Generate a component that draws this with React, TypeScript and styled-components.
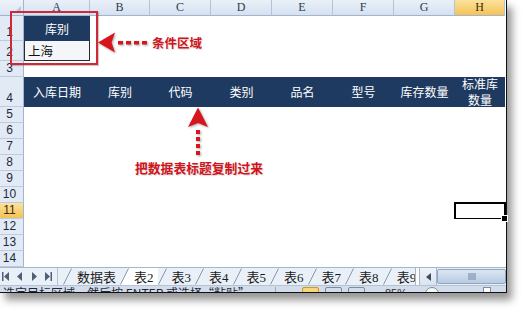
import React from "react";
import styled, { createGlobalStyle, css } from "styled-components";

const GlobalStyle = createGlobalStyle`
  html, body { margin: 0; padding: 0; background: #fff; }
  body { font-family: "Liberation Sans", "Noto Sans CJK SC", sans-serif; }
  * { box-sizing: border-box; }
`;

const Page = styled.div`
  position: relative;
  width: 529px;
  height: 316px;
  overflow: hidden;
  background: #fff;
`;

const Window = styled.div`
  width: 507px;
  display: flex;
  flex-direction: column;
  background: #fff;
  border-right: 1.5px solid #111;
  border-bottom: 1.5px solid #111;
  box-shadow: 5px 7px 8px rgba(0, 0, 0, 0.42);
`;

const Sheet = styled.div`
  display: grid;
  grid-template-columns: 24px 66px 60px repeat(5, 61px) 50px;
  grid-template-rows: 16px 25px 20px 16px 30px repeat(10, 16px);
`;

const orange = css`
  background: linear-gradient(#fbe29b, #f4c257);
  color: #3a2c10;
`;

const Corner = styled.div`
  position: relative;
  background: linear-gradient(#eef3fa, #dbe5f2);
  border-right: 1px solid #9eb6ce;
  border-bottom: 1px solid #9eb6ce;
  &::after {
    content: "";
    position: absolute;
    right: 2px;
    bottom: 2px;
    border-left: 7px solid transparent;
    border-bottom: 7px solid #b9c6d6;
  }
`;

const ColHead = styled.div<{ $active?: boolean }>`
  display: flex;
  align-items: center;
  justify-content: center;
  font-family: "Liberation Serif", serif;
  font-size: 12px;
  color: #2b3b4f;
  background: linear-gradient(#e9f0f9, #d6e1f0);
  border-right: 1px solid #b2c4da;
  border-bottom: 1px solid #9eb6ce;
  ${(p) => p.$active && orange}
`;

const RowHead = styled.div<{ $active?: boolean }>`
  display: flex;
  align-items: flex-end;
  justify-content: center;
  padding: 0 4px 1px 0;
  font-family: "Liberation Sans", sans-serif;
  font-size: 12px;
  line-height: 13px;
  color: #1e2a38;
  background: #e2eaf6;
  border-right: 1px solid #9eb6ce;
  border-bottom: 1px solid #bccbdf;
  ${(p) => p.$active && orange}
`;

const Cell = styled.div<{ $selected?: boolean }>`
  position: relative;
  background: #fff;
  ${(p) =>
    p.$selected &&
    css`
      &::after {
        content: "";
        position: absolute;
        left: -1px;
        top: -1px;
        right: -1px;
        bottom: -1px;
        border: 2.5px solid #000;
      }
      &::before {
        content: "";
        position: absolute;
        right: -3px;
        bottom: -3px;
        width: 5px;
        height: 5px;
        background: #000;
        border: 1px solid #fff;
        z-index: 1;
      }
    `}
`;

const TitleCell = styled.div`
  display: flex;
  align-items: center;
  justify-content: center;
  text-align: center;
  white-space: pre-line;
  background: #1f3a60;
  color: #fff;
  font-family: "Noto Sans CJK SC", sans-serif;
  font-size: 12px;
  line-height: 16px;
`;

const ValueCell = styled.div`
  display: flex;
  align-items: center;
  padding-left: 3px;
  background: #f4f6fa;
  border: 1px solid #2a2a2a;
  border-top: none;
  font-family: "Noto Sans CJK SC", sans-serif;
  font-size: 12.5px;
  color: #111;
`;

/* ---------- tab bar ---------- */
const TabBar = styled.div`
  height: 18px;
  display: flex;
  align-items: stretch;
  background: #eaf0f7;
  border-top: 1px solid #a6b7cc;
`;

const NavGroup = styled.div`
  flex: 0 0 58px;
  display: flex;
  align-items: center;
  justify-content: space-between;
  padding: 0 5px 0 2px;
  border-right: 1px solid #b3c2d4;
`;

const Tabs = styled.div`
  flex: 0 0 357px;
  display: flex;
  align-items: stretch;
  padding-left: 5px;
  overflow: hidden;
`;

const Tab = styled.div<{ $active?: boolean }>`
  display: flex;
  align-items: stretch;
  flex: 0 0 auto;
`;

const TabLabel = styled.span<{ $active?: boolean }>`
  display: flex;
  align-items: center;
  padding: 0 4px 0 5px;
  white-space: nowrap;
  font-family: "Liberation Serif", "Noto Sans CJK SC", serif;
  font-size: 13px;
  color: #1b1b1b;
  background: ${(p) => (p.$active ? "#fff" : "transparent")};
`;

const Splitter = styled.div`
  flex: 0 0 5px;
  background: #fbfcfe;
  border-left: 1px solid #a7b6c9;
  border-right: 1px solid #a7b6c9;
`;

const ScrollBtn = styled.div`
  flex: 0 0 17px;
  display: flex;
  align-items: center;
  justify-content: center;
  background: linear-gradient(#eef3f9, #d9e3ef);
  border-right: 1px solid #a7b6c9;
`;

const ScrollThumb = styled.div`
  flex: 1;
  display: flex;
  align-items: center;
  justify-content: center;
  margin: 1px 0;
  background: linear-gradient(#dbe6f3, #b9cbe2);
  border: 1px solid #8ea5c2;
  border-radius: 2px;
`;

const StatusBar = styled.div`
  height: 7px;
  display: flex;
  align-items: flex-start;
  overflow: hidden;
  background: #d3dcea;
  border-top: 1px solid #b4c2d5;
`;

const StatusText = styled.span`
  flex: 0 0 276px;
  padding-left: 3px;
  font-family: "Noto Sans CJK SC", sans-serif;
  font-size: 12px;
  line-height: 12px;
  margin-top: 1px;
  white-space: nowrap;
  color: #1e2a3a;
  border-right: 1px solid #9aaac0;
  height: 12px;
`;

const StatusGroup = styled.div`
  display: flex;
  align-items: flex-start;
  gap: 6px;
  padding-left: 26px;
  padding-top: 1px;
`;

const ViewBtn = styled.div<{ $active?: boolean }>`
  width: 17px;
  height: 10px;
  border: 1px solid ${(p) => (p.$active ? "#c99a2e" : "#7c8ba0")};
  background: ${(p) => (p.$active ? "#f8d77c" : "transparent")};
  border-radius: 2px;
`;

const ZoomText = styled.span`
  font-family: "Liberation Sans", sans-serif;
  font-size: 11px;
  line-height: 12px;
  color: #333;
  margin-left: 14px;
`;

const ZoomCircle = styled.div`
  width: 14px;
  height: 14px;
  border-radius: 50%;
  border: 1px solid #7d8ca0;
  background: #f6f8fb;
  margin-left: 12px;
`;

const SliderBox = styled.div`
  width: 8px;
  height: 10px;
  border: 1px solid #7d8ca0;
  background: #fff;
  margin-left: 38px;
`;

/* ---------- annotations (overlay) ---------- */
const RedBox = styled.div`
  position: absolute;
  left: 10px;
  top: 11px;
  width: 88px;
  height: 54px;
  border: 2px solid #cf2836;
  box-shadow: 1px 1px 1px rgba(0, 0, 0, 0.2);
  pointer-events: none;
`;

const ArrowSvg = styled.svg<{ $x: number; $y: number }>`
  position: absolute;
  left: ${(p) => p.$x}px;
  top: ${(p) => p.$y}px;
  filter: drop-shadow(1px 1px 1px rgba(0, 0, 0, 0.35));
`;

const Note = styled.div<{ $x: number; $y: number; $size: number }>`
  position: absolute;
  left: ${(p) => p.$x}px;
  top: ${(p) => p.$y}px;
  font-family: "Noto Sans CJK SC", sans-serif;
  font-weight: 700;
  font-size: ${(p) => p.$size}px;
  line-height: 14px;
  color: #d0141c;
  white-space: nowrap;
  text-shadow: 1px 1px 1px rgba(0, 0, 0, 0.15);
`;

const cols = ["A", "B", "C", "D", "E", "F", "G", "H"];
const headers = ["入库日期", "库别", "代码", "类别", "品名", "型号", "库存数量", "标准库\n数量"];
const tabs = ["数据表", "表2", "表3", "表4", "表5", "表6", "表7", "表8", "表9"];

const NavIcon = ({ kind }: { kind: "first" | "prev" | "next" | "last" }) => (
  <svg width="7" height="9" viewBox="0 0 7 9">
    {kind === "first" && (
      <>
        <rect x="0" y="0" width="1.5" height="9" fill="#4f5f76" />
        <path d="M7 0 L2 4.5 L7 9 Z" fill="#4f5f76" />
      </>
    )}
    {kind === "prev" && <path d="M6 0 L1 4.5 L6 9 Z" fill="#4f5f76" />}
    {kind === "next" && <path d="M1 0 L6 4.5 L1 9 Z" fill="#4f5f76" />}
    {kind === "last" && (
      <>
        <path d="M0 0 L5 4.5 L0 9 Z" fill="#4f5f76" />
        <rect x="5.5" y="0" width="1.5" height="9" fill="#4f5f76" />
      </>
    )}
  </svg>
);

const Slant = ({ active }: { active?: boolean }) => (
  <svg width="9" height="17" viewBox="0 0 9 17">
    {active && <path d="M0 17 L9 0 L9 17 Z" fill="#fff" />}
    <path d="M0.5 16.5 L8.5 0.5" stroke="#8797ad" strokeWidth="1" fill="none" />
  </svg>
);

function renderRow(r: number) {
  const cells: React.ReactNode[] = [];
  cells.push(
    <RowHead key={`h${r}`} $active={r === 11}>
      {r}
    </RowHead>
  );
  cols.forEach((c, i) => {
    const key = `${c}${r}`;
    if (r === 1 && i === 0) cells.push(<TitleCell key={key}>库别</TitleCell>);
    else if (r === 2 && i === 0) cells.push(<ValueCell key={key}>上海</ValueCell>);
    else if (r === 4) cells.push(<TitleCell key={key}>{headers[i]}</TitleCell>);
    else cells.push(<Cell key={key} $selected={r === 11 && c === "H"} />);
  });
  return cells;
}

export default function App() {
  const rows = Array.from({ length: 14 }, (_, i) => i + 1);
  return (
    <Page>
      <GlobalStyle />
      <Window>
        <Sheet>
          <Corner />
          {cols.map((c) => (
            <ColHead key={c} $active={c === "H"}>
              {c}
            </ColHead>
          ))}
          {rows.map((r) => renderRow(r))}
        </Sheet>
        <TabBar>
          <NavGroup>
            <NavIcon kind="first" />
            <NavIcon kind="prev" />
            <NavIcon kind="next" />
            <NavIcon kind="last" />
          </NavGroup>
          <Tabs>
            {tabs.map((t) => (
              <Tab key={t}>
                <Slant active={t === "表2"} />
                <TabLabel $active={t === "表2"}>{t}</TabLabel>
              </Tab>
            ))}
          </Tabs>
          <Splitter />
          <ScrollBtn>
            <svg width="5" height="8" viewBox="0 0 5 8">
              <path d="M5 0 L0 4 L5 8 Z" fill="#3e4c60" />
            </svg>
          </ScrollBtn>
          <ScrollThumb>
            <svg width="8" height="7" viewBox="0 0 8 7">
              <path d="M1 0 V7 M3 0 V7 M5 0 V7 M7 0 V7" stroke="#7288a6" strokeWidth="1" />
            </svg>
          </ScrollThumb>
        </TabBar>
        <StatusBar>
          <StatusText>选定目标区域，然后按 ENTER 或选择“粘贴”</StatusText>
          <StatusGroup>
            <ViewBtn $active />
            <ViewBtn />
            <ViewBtn />
            <ZoomText>85%</ZoomText>
            <ZoomCircle />
            <SliderBox />
          </StatusGroup>
        </StatusBar>
      </Window>

      <RedBox />
      <ArrowSvg $x={98} $y={32} width="52" height="21" viewBox="0 0 52 21">
        <path d="M0 10.5 L17 0.5 L13.5 10.5 L17 20.5 Z" fill="#d8141c" />
        <rect x="20" y="9" width="5" height="3.5" fill="#d8141c" />
        <rect x="28" y="9" width="5" height="3.5" fill="#d8141c" />
        <rect x="36" y="9" width="5" height="3.5" fill="#d8141c" />
        <rect x="44" y="9" width="5" height="3.5" fill="#d8141c" />
      </ArrowSvg>
      <Note $x={152} $y={36} $size={12.5}>条件区域</Note>

      <ArrowSvg $x={187} $y={107} width="22" height="50" viewBox="0 0 22 50">
        <path d="M11 0.5 L21 20 L11 16 L1 20 Z" fill="#d8141c" />
        <rect x="9" y="23" width="4" height="4" fill="#d8141c" />
        <rect x="9" y="30" width="4" height="4" fill="#d8141c" />
        <rect x="9" y="37" width="4" height="4" fill="#d8141c" />
        <rect x="9" y="44" width="4" height="4" fill="#d8141c" />
      </ArrowSvg>
      <Note $x={135} $y={161} $size={12.8}>把数据表标题复制过来</Note>
    </Page>
  );
}
